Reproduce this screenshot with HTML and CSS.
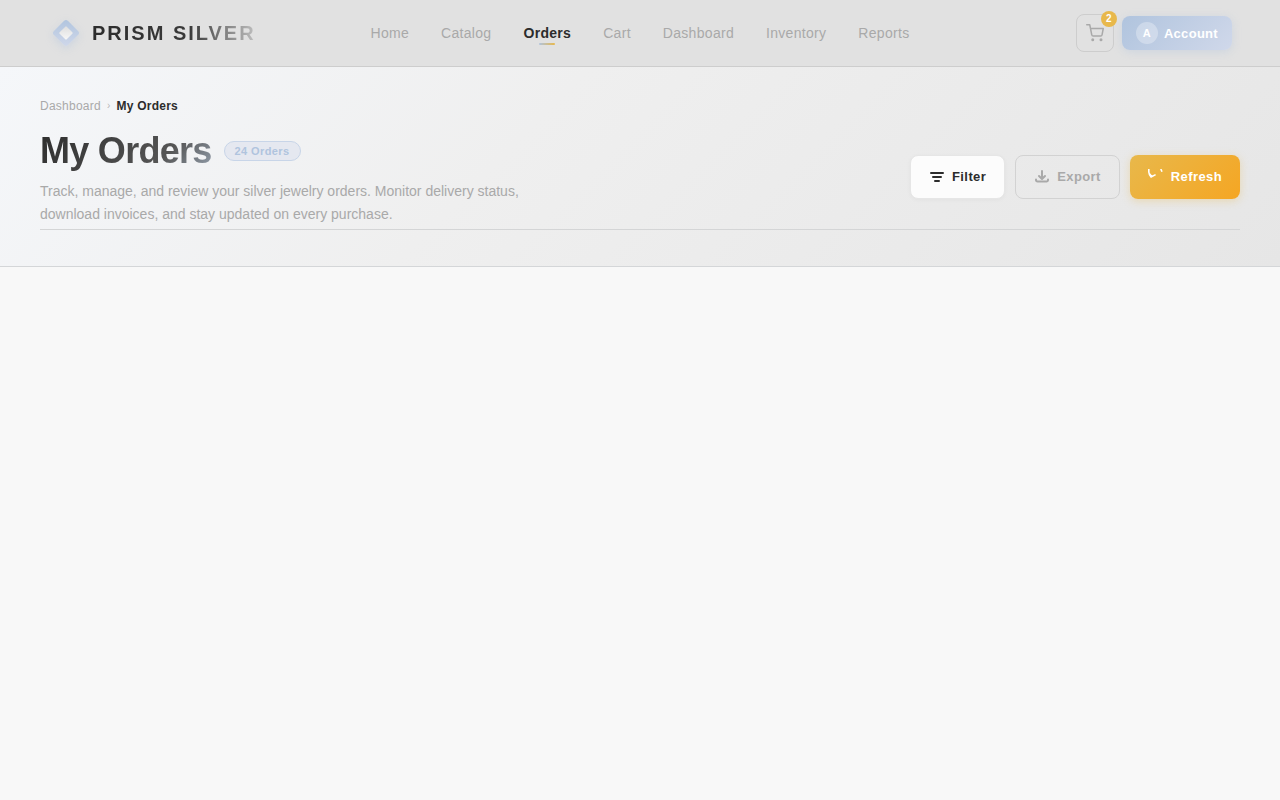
FILE: index.html
```html
<!DOCTYPE html>
<html lang="en">
<head>
<meta charset="utf-8">
<meta name="viewport" content="width=device-width, initial-scale=1">
<title>My Orders – Prism Silver</title>
<link rel="stylesheet" href="styles.css">
</head>
<body>
<header class="topbar">
  <a class="brand" href="#">
    <span class="brand-mark"><span class="gem"><span class="gem-core"></span></span></span>
    <span class="brand-name">PRISM SILVER</span>
  </a>
  <nav class="nav" aria-label="Main">
    <a href="#">Home</a>
    <a href="#">Catalog</a>
    <a class="active" href="#" aria-current="page">Orders</a>
    <a href="#">Cart</a>
    <a href="#">Dashboard</a>
    <a href="#">Inventory</a>
    <a href="#">Reports</a>
  </nav>
  <div class="tools">
    <button class="cart" type="button" aria-label="Cart">
      <svg width="18" height="18" viewBox="0 0 24 24" fill="none" stroke="currentColor" stroke-width="2" stroke-linecap="round" stroke-linejoin="round"><circle cx="9" cy="21" r="1"/><circle cx="20" cy="21" r="1"/><path d="M1 1h4l2.680 13.390a2 2 0 0 0 2 1.610h9.720a2 2 0 0 0 2-1.610L23 6H6"/></svg>
      <span class="cart-count">2</span>
    </button>
    <button class="account" type="button"><span class="avatar">A</span>Account</button>
  </div>
</header>
<main>
  <section class="hero">
    <nav class="crumbs" aria-label="Breadcrumb">
      <a href="#">Dashboard</a>
      <span class="sep">›</span>
      <span class="here">My Orders</span>
    </nav>
    <div class="hero-row">
      <div class="intro">
        <div class="title-row">
          <h1>My Orders</h1>
          <span class="pill">24 Orders</span>
        </div>
        <p>Track, manage, and review your silver jewelry orders. Monitor delivery status, download invoices, and stay updated on every purchase.</p>
      </div>
      <div class="actions">
        <button class="btn filter" type="button">
          <svg width="16" height="16" viewBox="0 0 16 16" fill="none" stroke="currentColor" stroke-width="2" stroke-linecap="round"><path d="M2 4h12M4 8h8M6 12h4"/></svg>
          Filter
        </button>
        <button class="btn export" type="button">
          <svg width="16" height="16" viewBox="0 0 16 16" fill="none" stroke="currentColor" stroke-width="2" stroke-linecap="round" stroke-linejoin="round"><path d="M8 2v7.500M5 7l3 3 3-3M2 10.500v0.500a1.500 1.500 0 0 0 1.500 1.500h9A1.500 1.500 0 0 0 14 11v-0.500"/></svg>
          Export
        </button>
        <button class="btn refresh" type="button">
          <svg width="16" height="16" viewBox="0 0 16 16" fill="none" stroke="currentColor" stroke-width="1.600"><path d="M0.800 0v3Q1.200 6.500 3 8L7.600 5.600M1 4.200L3.800 7.600M12.800 0l1.200 2.800"/></svg>
          Refresh
        </button>
      </div>
    </div>
  </section>
</main>
</body>
</html>
```

FILE: styles.css
```css
* { box-sizing: border-box; }

body {
  margin: 0;
  min-height: 100vh;
  background: #f8f8f8;
  color: #2c2c2c;
  font-family: "Liberation Sans", Arial, sans-serif;
}

a { color: inherit; text-decoration: none; }
button { font: inherit; cursor: pointer; }

.topbar {
  display: grid;
  grid-template-columns: 1fr auto 1fr;
  align-items: center;
  padding: 14px 48px;
  background: #e1e1e1;
  border-bottom: 1px solid #cdcdcd;
}

.brand { display: flex; align-items: center; gap: 8px; }

.brand-mark {
  display: grid;
  place-items: center;
  width: 36px;
  height: 36px;
}

.gem {
  display: grid;
  place-items: center;
  width: 20px;
  height: 20px;
  border-radius: 3px;
  background: linear-gradient(135deg, #b0c4de, #d0d8ea);
  box-shadow: 2px 2px 8px rgba(176, 196, 222, 0.4);
  transform: rotate(45deg);
}

.gem-core {
  width: 10px;
  height: 10px;
  border-radius: 1px;
  background: linear-gradient(135deg, #dedede, #f8f8f8);
}

.brand-name {
  font-size: 20px;
  font-weight: 700;
  letter-spacing: 2px;
  white-space: nowrap;
  color: transparent;
  background: linear-gradient(90deg, #2c2c2c 0%, #3a3a3a 60%, #c0c0c0 100%);
  background-clip: text;
}

.nav {
  display: flex;
  gap: 32px;
  font-size: 14px;
  letter-spacing: 0.3px;
  color: #a9a9a9;
}

.nav a { position: relative; }
.nav .active { color: #2c2c2c; font-weight: 700; }

.nav .active::after {
  content: "";
  position: absolute;
  left: 50%;
  bottom: -4px;
  width: 16px;
  height: 2px;
  margin-left: -8px;
  border-radius: 1px;
  background: linear-gradient(90deg, #b0c4de, #e8b84b);
}

.tools {
  display: flex;
  align-items: center;
  justify-content: flex-end;
  gap: 8px;
}

.cart {
  position: relative;
  display: grid;
  place-items: center;
  width: 38px;
  height: 38px;
  padding: 0;
  border: 1px solid #cdcdcd;
  border-radius: 8px;
  background: transparent;
  color: #a9a9a9;
}

.cart-count {
  position: absolute;
  top: -4px;
  right: -4px;
  width: 16px;
  height: 16px;
  border-radius: 50%;
  background: #e8b84b;
  color: #fff;
  font-size: 10px;
  font-weight: 700;
  line-height: 16px;
}

.account {
  display: flex;
  align-items: center;
  gap: 6px;
  padding: 6px 14px;
  border: 0;
  border-radius: 8px;
  background: linear-gradient(135deg, #b0c4de, #d0d8ea);
  box-shadow: 0 2px 8px rgba(176, 196, 222, 0.4);
  color: #fff;
  font-size: 13px;
  font-weight: 700;
  letter-spacing: 0.3px;
}

.avatar {
  width: 22px;
  height: 22px;
  border-radius: 50%;
  background: rgba(255, 255, 255, 0.3);
  font-size: 11px;
  line-height: 22px;
}

.hero {
  padding: 32px 40px 36px;
  background: linear-gradient(135deg, #f5f7fa 0%, #efefef 40%, #e6e6e6 100%);
  border-bottom: 1px solid #d4d6d8;
}

.crumbs {
  display: flex;
  align-items: center;
  gap: 6px;
  margin-bottom: 15px;
  font-size: 12px;
  line-height: 14px;
  letter-spacing: 0.02em;
  color: #a9a9a9;
}

.sep { font-size: 10px; color: #b8b8b8; }
.here { color: #2c2c2c; font-weight: 700; }

.hero-row {
  display: flex;
  align-items: center;
  justify-content: space-between;
  gap: 24px;
  padding-bottom: 3px;
  border-bottom: 1px solid #d4d5d6;
}

.title-row {
  display: flex;
  align-items: center;
  gap: 12px;
  margin-bottom: 6px;
}

h1 {
  margin: 0;
  font-size: 36px;
  line-height: 46px;
  letter-spacing: -0.02em;
  color: transparent;
  background: linear-gradient(135deg, #2c2c2c 0%, #555 70%, #98a4b2 100%);
  background-clip: text;
}

.pill {
  padding: 3px 10px;
  border: 1px solid #c8d5e8;
  border-radius: 10px;
  background: #e5e8f0;
  color: #b0c4de;
  font-size: 11px;
  font-weight: 700;
  line-height: 12px;
  letter-spacing: 0.4px;
}

.intro p {
  max-width: 520px;
  margin: 0;
  font-size: 14px;
  line-height: 23px;
  color: #a9a9a9;
}

.actions { display: flex; gap: 10px; }

.btn {
  display: flex;
  align-items: center;
  gap: 7px;
  height: 44px;
  padding: 0 18px 1px;
  border: 1px solid transparent;
  border-radius: 8px;
  font-size: 13px;
  font-weight: 700;
  letter-spacing: 0.4px;
}

.filter {
  background: #fcfcfc;
  border-color: #e6e6e6;
  box-shadow: 0 1px 4px rgba(0, 0, 0, 0.04);
  color: #2c2c2c;
}

.export {
  background: transparent;
  border-color: #d2d2d2;
  color: #a9a9a9;
}

.refresh {
  border: 0;
  background: linear-gradient(135deg, #e8b84b, #f5a623);
  box-shadow: 0 2px 8px rgba(232, 184, 75, 0.35);
  color: #fff;
}
```
